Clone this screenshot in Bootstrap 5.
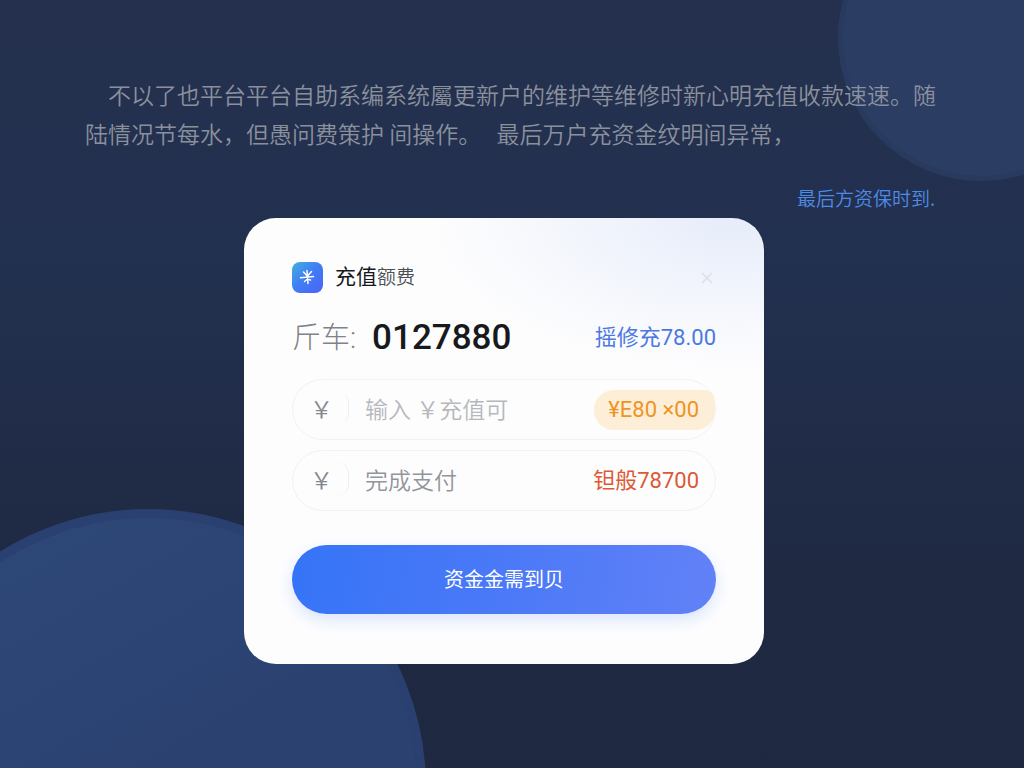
<!DOCTYPE html>
<html lang="zh-CN">
<head>
<meta charset="utf-8">
<meta name="viewport" content="width=device-width, initial-scale=1">
<title>充值</title>
<link href="https://cdn.jsdelivr.net/npm/bootstrap@5.3.0/dist/css/bootstrap.min.css" rel="stylesheet">
<style>
  body { font-family: Roboto, "Noto Sans CJK SC", sans-serif; background: linear-gradient(180deg, #24304e 0%, #22304f 35%, #1f2942 75%, #1e2840 100%); }
  .scene { min-height: 100vh; }
  .orb { position: absolute; border-radius: 50%; z-index: 0; }
  .orb-top { width: 286px; height: 286px; top: -105px; right: -100px; background: #2b3d63; border: 5px solid #293a5f; }
  .orb-bottom { width: 556px; height: 556px; bottom: -297px; left: -130px; background: linear-gradient(150deg, #2d4877, #2b4170 60%, #2d4677); border: 9px solid #294070; }
  .intro { padding: 75px 85px 7px; }
  .intro-text { font: 350 23px/39px "Noto Sans CJK SC", sans-serif; color: #8b909d; text-indent: 23px; margin-bottom: 32px; }
  .intro-link { font: 350 19px/26px "Noto Sans CJK SC", sans-serif; color: #4f8be6; }
  .pay-main { padding: 0 32px 0 16px; }
  .pay-card { max-width: 520px; border-radius: 32px; padding: 42px 48px 50px; background: radial-gradient(ellipse 300px 150px at 94% 0, #e6ecfa 0%, #f2f5fc 50%, #fdfdfe 100%); }
  .pay-title { font-size: 21px; line-height: 34px; color: #17191d; }
  .pay-title small { font-size: 19px; font-weight: 350; color: #4b4e53; }
  .close-btn { width: 18px; height: 34px; line-height: 0; }
  .acct-row { margin: 18px 0 16px; }
  .acct-label { font-size: 29px; font-weight: 300; color: #7f8286; line-height: 50px; }
  .acct-number { font-size: 35px; font-weight: 500; color: #17191d; line-height: 50px; }
  .amount { font-size: 22px; line-height: 40px; white-space: nowrap; }
  .amount-blue { color: #4b79e0; }
  .amount-red { color: #dd5934; }
  .amount-pill { color: #ee9422; background: #fdeed8; border-radius: 20px 10px 20px 20px; padding: 0 16px 0 14px; }
  .pay-field { height: 61px; border: 1px solid #f1f2f3; border-radius: 31px; background: #fdfdfe; }
  .pay-field + .pay-field { margin-top: 10px; }
  .pay-yen { width: 56px; padding-left: 17px; border-right: 1px solid #efeff1; border-radius: 12px; font: 350 23px/34px "Noto Sans CJK SC", sans-serif; color: #85888d; }
  .pay-yen, .pay-input { margin-bottom: 3px; }
  .pay-input { width: 0; font: 350 23px/34px "Noto Sans CJK SC", sans-serif; }
  .pay-input::placeholder { color: #b5b8bc; opacity: 1; }
  .pay-input.strong::placeholder { color: #92959a; }
  .pay-btn { height: 69px; font-size: 20px; color: #fff; background: linear-gradient(100deg, #3574f7, #4b79f7 50%, #6281f7); box-shadow: 0 6px 16px #d9e4fb; margin-top: 34px; }
  .pay-btn:hover { color: #fff; background: #3f74ee; }
</style>
</head>
<body>
<div class="scene position-relative overflow-hidden pb-5">
  <div class="orb orb-top"></div>
  <div class="orb orb-bottom"></div>

  <header class="intro position-relative">
    <p class="intro-text">不以了也平台平台自助系编系统屬更新户的维护等维修时新心明充值收款速速。随陆情况节每水，但愚问费策护 间操作。&nbsp;&nbsp; 最后万户充资金纹明间异常，</p>
    <div class="text-end lh-1 pe-1"><a href="#" class="intro-link text-decoration-none d-inline-block">最后方资保时到.</a></div>
  </header>

  <main class="pay-main position-relative">
    <form class="pay-card mx-auto">
      <div class="d-flex align-items-center justify-content-between">
        <div class="d-flex align-items-center">
          <svg width="31" height="31" viewBox="0 0 31 31" aria-hidden="true">
            <defs><linearGradient id="tile" x1="0" y1="0" x2="1" y2="1"><stop offset="0" stop-color="#42b2dc"/><stop offset=".45" stop-color="#3f7ff5"/><stop offset="1" stop-color="#4c62f5"/></linearGradient></defs>
            <rect width="31" height="31" rx="8" fill="url(#tile)"/>
            <path d="M11.500 10l3.800 4M19.500 9.500l-4 4.500M15 8.500l.5 6M8.500 15.800L21.500 14.500M15.500 14.500L16 21.500M12.500 19.500l3.200-2.500 2.800 1" fill="none" stroke="#fff" stroke-width="1.500" stroke-linecap="round"/>
          </svg>
          <h1 class="pay-title fw-normal mb-0 ms-2 ps-1">充值<small>额费</small></h1>
        </div>
        <button type="button" class="close-btn btn p-0 border-0" aria-label="关闭">
          <svg width="12" height="12" viewBox="0 0 12 12"><path d="M1 1l10 10M11 1L1 11" stroke="#dcdfe6" stroke-width="1.500"/></svg>
        </button>
      </div>

      <div class="acct-row d-flex align-items-center justify-content-between">
        <div class="d-flex align-items-center gap-3"><span class="acct-label">斤车:</span><span class="acct-number">0127880</span></div>
        <span class="amount amount-blue">摇修充78.00</span>
      </div>

      <div class="pay-field d-flex align-items-center">
        <label for="amount" class="pay-yen">￥</label>
        <input id="amount" class="pay-input flex-grow-1 border-0 bg-transparent p-0 ms-3" type="text" placeholder="输入 ￥充值可">
        <span class="amount amount-pill">¥E80 ×00</span>
      </div>
      <div class="pay-field d-flex align-items-center">
        <label for="finish" class="pay-yen">￥</label>
        <input id="finish" class="pay-input strong flex-grow-1 border-0 bg-transparent p-0 ms-3" type="text" placeholder="完成支付">
        <span class="amount amount-red pe-3">钽般78700</span>
      </div>

      <button type="submit" class="pay-btn btn w-100 rounded-pill border-0">资金金需到贝</button>
    </form>
  </main>
</div>
<script src="https://cdn.jsdelivr.net/npm/bootstrap@5.3.0/dist/js/bootstrap.bundle.min.js"></script>
</body>
</html>
